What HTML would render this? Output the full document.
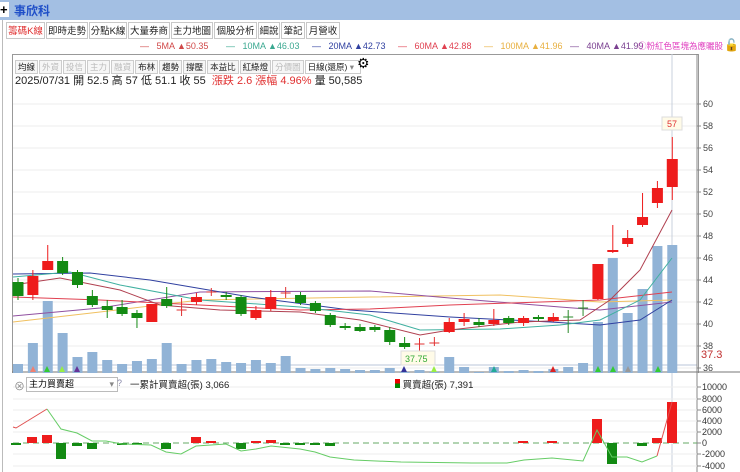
<!DOCTYPE html>
<html><head><meta charset="utf-8"><style>
body{margin:0;width:740px;height:472px;overflow:hidden;background:#fff;font-family:"Liberation Sans","Noto Sans CJK TC",sans-serif;position:relative}
.t{position:absolute;white-space:nowrap}
#title{position:absolute;left:0;top:0;width:740px;height:20px;background:#a3bfe3}
.tab{position:absolute;top:22px;height:17px;border:1px solid #c8c8c8;font-size:9.5px;line-height:17px;text-align:center;color:#222;background:#fff;box-sizing:border-box}
.btn{display:inline-block;border:1px solid #ccc;font-size:8.5px;line-height:12px;padding:0 2px;margin-right:1px;color:#222;background:#f6f6f6}
.dis{color:#bbb}
</style></head><body>
<div id="title"></div>
<div class="t" style="left:0;top:2px;width:9px;height:15px;background:#fff;font-size:13px;line-height:15px;font-weight:bold">+</div>
<div class="t" style="left:14px;top:2px;font-size:12px;font-weight:bold;color:#1f4fc8">事欣科</div>
<div style="position:absolute;left:2px;top:20px;width:1px;height:452px;background:#bbb"></div>
<div class="tab" style="left:6px;width:39px;color:#e03030">籌碼K線</div>
<div class="tab" style="left:46px;width:42px">即時走勢</div>
<div class="tab" style="left:89px;width:38px">分點K線</div>
<div class="tab" style="left:128px;width:42px">大量券商</div>
<div class="tab" style="left:171px;width:42px">主力地圖</div>
<div class="tab" style="left:214px;width:43px">個股分析</div>
<div class="tab" style="left:258px;width:22px">細說</div>
<div class="tab" style="left:281px;width:24px">筆記</div>
<div class="tab" style="left:306px;width:34px">月營收</div>
<div class="t" style="left:140px;top:41px;font-size:9px;color:#d04848">—&nbsp;&nbsp; 5MA ▲50.35</div>
<div class="t" style="left:226px;top:41px;font-size:9px;color:#3aa890">—&nbsp;&nbsp; 10MA ▲46.03</div>
<div class="t" style="left:312px;top:41px;font-size:9px;color:#3040a0">—&nbsp;&nbsp; 20MA ▲42.73</div>
<div class="t" style="left:398px;top:41px;font-size:9px;color:#e04050">—&nbsp;&nbsp; 60MA ▲42.88</div>
<div class="t" style="left:484px;top:41px;font-size:9px;color:#e8b040">—&nbsp;&nbsp; 100MA ▲41.96</div>
<div class="t" style="left:570px;top:41px;font-size:9px;color:#7a4090">—&nbsp;&nbsp; 40MA ▲41.99</div>
<div class="t" style="left:638px;top:40px;font-size:8.5px;color:#e040c0">ⓘ粉紅色區塊為應曬股</div>
<div class="t" style="left:724px;top:38px;font-size:12px">🔓</div>
<div style="position:absolute;left:12px;top:54px;width:685px;height:318px;border:1px solid #999;border-bottom:none"></div>
<div class="t" style="left:15px;top:57px">
<span class="btn">均線</span><span class="btn dis">外資</span><span class="btn dis">投信</span><span class="btn dis">主力</span><span class="btn dis">融資</span><span class="btn">布林</span><span class="btn">趨勢</span><span class="btn">撐壓</span><span class="btn">本益比</span><span class="btn">紅綠燈</span><span class="btn dis">分價圖</span><span class="btn" style="width:50px;background:#fff">日線(還原) <span style="color:#888">▾</span></span></div>
<div class="t" style="left:357px;top:55px;font-size:14px">⚙</div>
<div class="t" style="left:15px;top:72px;font-size:11px;color:#222">2025/07/31 開 52.5 高 57 低 51.1 收 55 &nbsp;<span style="color:#e03030">漲跌 2.6 漲幅 4.96%</span> 量 50,585</div>
<svg width="740" height="472" style="position:absolute;left:0;top:0" id="s"></svg>
<div class="t" style="left:14px;top:378px;font-size:11px;color:#888">⊗</div>
<div class="t" style="left:26px;top:377px;width:88px;height:13px;border:1px solid #bbb;font-size:9px;line-height:13px;padding-left:2px">主力買賣超<span style="float:right;color:#888;padding-right:3px">▾</span></div>
<div class="t" style="left:117px;top:378px;font-size:9px;color:#88a">?</div>
<div class="t" style="left:130px;top:377px;font-size:9.5px;color:#222">一累計買賣超(張) 3,066</div>
<div class="t" style="left:395px;top:377px;font-size:9.5px;color:#222"><span style="display:inline-block;width:5px;height:9px;background:linear-gradient(#e00 50%,#080 50%)"></span> 買賣超(張) 7,391</div>
<script>
var s=document.getElementById('s'),h='';
function L(x1,y1,x2,y2,c,w,d){h+='<line x1="'+x1+'" y1="'+y1+'" x2="'+x2+'" y2="'+y2+'" stroke="'+c+'" stroke-width="'+(w||1)+'"'+(d?' stroke-dasharray="'+d+'"':'')+'/>';}
function R(x,y,w,hh,c){h+='<rect x="'+x+'" y="'+y+'" width="'+w+'" height="'+hh+'" fill="'+c+'"/>';}
function T(x,y,t,c,fs){h+='<text x="'+x+'" y="'+y+'" font-size="'+(fs||9)+'" fill="'+(c||'#333')+'" font-family="Liberation Sans">'+t+'</text>';}
function P(pts,c,w){h+='<polyline fill="none" stroke="'+c+'" stroke-width="'+(w||1)+'" points="'+pts+'"/>';}
for(var p=60;p>=36;p-=2){var y=104+(60-p)*11;L(13,y,697,y,'#eee');L(697,y,701,y,'#888');T(703,y+3,p,'#444');}
L(13,365,697,365,'#b8c4d8');
L(697,54,697,472,'#888');L(672,54,672,472,'#c8d0dc');L(12,372,740,372,'#777');
T(701,358,'37.3','#c03030',11);
var V=[364,343,301,333,357,352,360,364,361,359,343,364,360,359,362,363,360,363,356,368,369,368,369,370,370,368,372,370,372,357,367,372,367,371,370,371,369,367,363,322,258,313,289,246,245];
function X(i){return 18+14.87*i;}
V.forEach(function(v,i){R(X(i)-5,v,10,373-v,'#91b3d6');});
[[33,'#f08070'],[47,'#3c3'],[62,'#9e4'],[77,'#639'],[404,'#339'],[494,'#2a9'],[553,'#d22'],[598,'#3c3'],[613,'#3c3'],[628,'#999'],[658,'#3c3'],[434,'#9e4']].forEach(function(m){h+='<polygon points="'+(m[0]-3)+',372 '+(m[0]+3)+',372 '+m[0]+',366" fill="'+m[1]+'"/>';});
P('13,322 100,312 200,300 370,297 500,295 600,302 672,300','#f0c060');
P('13,316 100,308 200,292 370,291 450,298 560,307 600,310 672,302','#9050a0');
P('13,274 90,273 150,280 250,297 350,310 450,317 550,322 600,325 640,320 672,300','#3040a0');
P('13,297 100,300 200,305 300,310 370,309 450,305 600,300 672,292','#e04050');
P('13,277 70,272 120,285 200,300 300,307 370,315 420,330 500,329 560,325 600,320 640,300 672,258','#40b0a0');
P('13,285 60,278 120,290 160,305 220,310 300,312 360,320 420,335 450,330 520,322 580,320 610,300 640,270 672,210','#b04050');
var C=[[282,296,278,300],[295,276,270,300],[270,261,245,270],[261,273,257,275],[272,285,270,288],[296,305,290,307],[306,310,300,318],[307,314,300,316],[313,318,310,328],[322,304,304,322],[299,306,287,308],[310,310,298,316],[302,297,293,305],[292,292,288,296],[295,297,292,300],[297,314,295,316],[318,310,306,320],[309,297,290,311],[293,293,287,298],[295,303,292,305],[303,311,301,313],[315,325,313,327],[326,328,323,330],[327,331,324,332],[327,330,325,332],[330,342,327,345],[343,347,337,349],[344,344,338,352],[343,343,337,346],[332,322,318,333],[322,319,313,326],[322,325,318,327],[324,320,309,326],[318,323,316,325],[323,318,316,326],[317,319,315,321],[321,317,313,322],[317,317,310,333],[308,308,300,316],[299,264,264,300],[252,250,225,253],[244,238,230,247],[225,217,193,227],[203,188,181,208],[187,159,137,200]];
C.forEach(function(c,i){var x=X(i),up=c[1]<c[0],col=c[0]==c[1]?(i>36?'#2a8a2a':'#e03030'):(up?'#ee1c1c':'#138a13');L(x,c[2],x,c[3],col);if(c[0]==c[1])L(x-5,c[0],x+5,c[0],col);else R(x-5.5,Math.min(c[0],c[1]),11,Math.abs(c[0]-c[1]),col);});
h+='<rect x="662" y="117" width="20" height="13" fill="#fffbe8" stroke="#ddd"/>';T(667,127,'57','#e03030');
h+='<rect x="401" y="351" width="34" height="14" fill="#fffbe8" stroke="#ddd"/>';T(405,362,'37.75','#3a3');
[[10000,387],[8000,399],[6000,410],[4000,421],[2000,432],[0,443],[-2000,454],[-4000,466]].forEach(function(a){L(13,a[1],697,a[1],a[0]==0?'#fff':'#eee');L(697,a[1],701,a[1],'#888');T(702,a[1]+3,a[0],'#333');});
L(13,443,697,443,'#6a6',1,'6,4');
var S=[[16,443,445,'g'],[32,437,443,'r'],[47,435,443,'r'],[61,443,459,'g'],[77,443,446,'g'],[92,443,449,'g'],[122,443,445,'g'],[137,443,445,'g'],[166,443,449,'g'],[196,437,443,'r'],[211,441,443,'r'],[241,443,449,'g'],[256,441,443,'r'],[271,440,443,'r'],[285,443,445,'g'],[300,443,445,'g'],[315,443,445,'g'],[330,443,446,'g'],[523,441,443,'r'],[552,441,443,'r'],[597,419,443,'r'],[612,443,464,'g'],[642,443,446,'g'],[657,438,443,'r'],[672,402,443,'r']];
S.forEach(function(b){R(b[0]-5,b[1],10,b[2]-b[1],b[3]=='r'?'#ee1c1c':'#138a13');});
P('13,427 16,428 47,409','#e05050');
P('47,409 61,429 77,433 92,441 106,441 122,444 151,445 166,452 181,454 196,446 226,444 241,451 256,449 271,446 300,449 315,452 330,457 354,460 401,462 472,463 507,463 524,460 552,458 583,461 597,430 612,457 627,457 642,462 657,456','#6c6');
P('657,456 672,402','#e05050');
s.innerHTML=h;
</script>
</body></html>
